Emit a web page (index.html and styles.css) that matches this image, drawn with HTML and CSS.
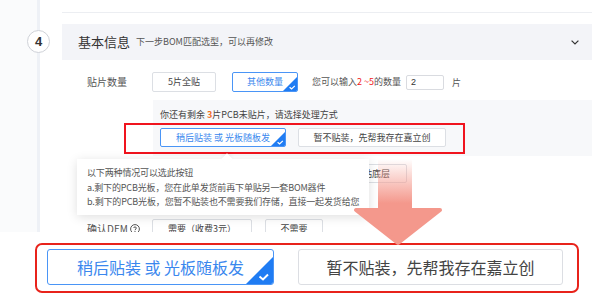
FILE: index.html
```html
<!DOCTYPE html>
<html lang="zh-CN">
  <head>
    <meta charset="UTF-8" />
    <meta name="viewport" content="width=device-width, initial-scale=1.0" />
    <title>贴片选项</title>
    <link rel="stylesheet" href="styles.css">
  </head>
  <body>
    <div class="page">
      <div class="screen">
        <div class="rail"><span class="step">4</span></div>

        <div class="main">
          <div class="divider"></div>

          <div class="section-head">
            <span class="section-title">基本信息</span>
            <span class="section-sub">下一步BOM匹配选型，可以再修改</span>
            <svg class="chevron" width="8" height="5" viewBox="0 0 8 5">
              <polyline points="0.6,0.6 4,4 7.4,0.6" fill="none" stroke="#333" stroke-width="1.2" />
            </svg>
          </div>

          <div class="row row-qty">
            <span class="label">贴片数量</span>
            <button class="opt opt-full">5片全贴</button>
            <button class="opt opt-other active">
              其他数量
              <svg class="tick" width="14" height="14" viewBox="0 0 14 14">
                <polygon points="14,0 14,14 0,14" fill="#1f7cf3" />
                <polyline points="6.6,10.2 8.6,12 11.8,8.8" fill="none" stroke="#fff" stroke-width="1.2" />
              </svg>
            </button>
            <span class="hint">您可以输入<em>2 ~5</em>的数量</span>
            <input class="qty" type="text" value="2" />
            <span class="unit">片</span>
          </div>

          <div class="remain">
            <p class="remain-text">你还有剩余 <b>3</b>片PCB未贴片，请选择处理方式</p>
            <div class="remain-opts">
              <button class="opt opt-later active">
                稍后贴装 或 光板随板发
                <svg class="tick" width="14" height="14" viewBox="0 0 14 14">
                  <polygon points="14,0 14,14 0,14" fill="#1f7cf3" />
                  <polyline points="6.6,10.2 8.6,12 11.8,8.8" fill="none" stroke="#fff" stroke-width="1.2" />
                </svg>
              </button>
              <button class="opt opt-store">暂不贴装，先帮我存在嘉立创</button>
            </div>
            <div class="mark"></div>
          </div>

          <!-- the rest of this row sits under the tooltip -->
          <div class="row row-side">
            <button class="opt opt-bottom">贴底层</button>
          </div>

          <div class="row row-dem">
            <span class="label">确认DEM
              <svg class="help" width="10" height="10" viewBox="0 0 10 10">
                <circle cx="5" cy="5" r="4.4" fill="none" stroke="#444" stroke-width="0.9" />
                <path d="M3.6 4 C3.6 2.6 6.4 2.6 6.4 4 C6.4 5 5 5 5 6.2" fill="none" stroke="#444" stroke-width="0.9" />
                <circle cx="5" cy="7.6" r="0.6" fill="#444" />
              </svg>
            </span>
            <button class="opt opt-need">需要（收费3元）</button>
            <button class="opt opt-no">不需要</button>
          </div>
        </div>

        <div class="tip">
          <p>以下两种情况可以选此按钮</p>
          <p>a.剩下的PCB光板，您在此单发货前再下单贴另一套BOM器件</p>
          <p>b.剩下的PCB光板，您暂不贴装也不需要我们存储，直接一起发货给您</p>
        </div>
      </div>

      <div class="callout">
        <button class="big big-later">
          稍后贴装 或 光板随板发
          <svg class="tick" width="27" height="27" viewBox="0 0 27 27">
            <polygon points="27,0 27,27 0,27" fill="#1f7cf3" />
            <polyline points="13.5,19.5 17,22.5 22,17.5" fill="none" stroke="#fff" stroke-width="2" />
          </svg>
        </button>
        <button class="big big-store">暂不贴装，先帮我存在嘉立创</button>
      </div>

      <svg class="arrow" width="92" height="92" viewBox="0 0 92 92">
        <defs>
          <linearGradient id="shaft" x1="0" y1="0" x2="0" y2="1">
            <stop offset="0" stop-color="#f4988c" stop-opacity="0" />
            <stop offset="0.85" stop-color="#f4988c" stop-opacity="1" />
          </linearGradient>
        </defs>
        <rect x="25" y="2" width="34" height="52" fill="url(#shaft)" />
        <polygon points="3,53 87,53 45,86" fill="#f4988c" stroke="#f4988c" stroke-width="4" stroke-linejoin="round" />
      </svg>
    </div>
  </body>
</html>
```

FILE: styles.css
```css
* {
  box-sizing: border-box;
}

body {
  margin: 0;
  background-color: #fff;
  font-family: "Noto Sans CJK SC", "Noto Sans", sans-serif;
  color: #333;
}

p {
  margin: 0;
}

.page {
  position: relative;
  width: 600px;
  height: 304px;
  overflow: hidden;
}

/* the cropped screenshot */
.screen {
  position: relative;
  display: flex;
  height: 232px;
  overflow: hidden;
}

.rail {
  flex: none;
  width: 62px;
  background:
    linear-gradient(#eef1f6, #eef1f6) 37px 0 / 3px 100% no-repeat,
    linear-gradient(#fafbfc, #fafbfc) 0 0 / 37px 100% no-repeat;
}

.step {
  display: flex;
  align-items: center;
  justify-content: center;
  width: 23px;
  height: 23px;
  margin: 30px 0 0 27px;
  border: 1px solid #cfd2d8;
  border-radius: 50%;
  background-color: #fff;
  font-family: "Liberation Sans", Arial, sans-serif;
  font-size: 13px;
  font-weight: bold;
  color: #333;
  line-height: 1;
}

.main {
  flex: none;
  width: 530px;
}

.divider {
  margin-top: 12px;
  border-top: 1px solid #eceef2;
}

.section-head {
  display: flex;
  align-items: center;
  height: 36px;
  margin-top: 11px;
  padding: 0 13px 0 16px;
  background-color: #f3f4f8;
}

.section-title {
  font-size: 13px;
  line-height: 16px;
  color: #333;
}

.section-sub {
  margin-left: 6px;
  font-size: 9px;
  line-height: 12px;
  color: #555;
}

.chevron {
  margin-left: auto;
}

.row {
  display: flex;
  align-items: center;
  margin-left: 25px;
}

.label {
  display: flex;
  align-items: center;
  gap: 2px;
  width: 65px;
  font-size: 10px;
  line-height: 14px;
  color: #555;
}

.opt {
  position: relative;
  flex: none;
  height: 20px;
  padding: 0;
  border: 1px solid #dcdfe4;
  border-radius: 2px;
  background-color: #fff;
  font-family: inherit;
  font-size: 9px;
  line-height: 12px;
  color: #444;
  overflow: hidden;
}

.opt.active {
  border-color: #4a95f6;
  color: #3a87ee;
}

.tick {
  position: absolute;
  right: 0;
  bottom: 0;
}

.row-qty {
  height: 20px;
  margin-top: 12px;
}

.opt-full {
  width: 64px;
}

.opt-other {
  width: 66px;
  margin-left: 16px;
}

.hint {
  margin-left: 14px;
  font-size: 9px;
  line-height: 12px;
  color: #555;
}

.hint em {
  font-style: normal;
  color: #f0211b;
}

.qty {
  width: 38px;
  height: 15px;
  margin-left: 5px;
  padding: 0 0 0 4px;
  border: 1px solid #d9dbe0;
  border-radius: 2px;
  font-family: "Liberation Sans", Arial, sans-serif;
  font-size: 9px;
  color: #333;
}

.unit {
  margin-left: 8px;
  font-size: 9px;
  color: #555;
}

.remain {
  position: relative;
  height: 56px;
  margin: 8px 0 0 91px;
  padding: 9px 0 0 7px;
  background-color: #f7f8fa;
}

.remain-text {
  font-size: 9px;
  line-height: 12px;
  color: #444;
}

.remain-text b {
  color: #f26b1d;
}

.remain-opts {
  display: flex;
  gap: 12px;
  margin-top: 7px;
}

.opt-later {
  width: 126px;
  height: 19px;
}

.opt-store {
  width: 148px;
  height: 19px;
}

.mark {
  position: absolute;
  left: -29px;
  top: 23px;
  width: 341px;
  height: 31px;
  border: 2px solid #f0141e;
}

.row-side {
  height: 19px;
  margin-top: 8px;
}

.opt-bottom {
  width: 61px;
  height: 19px;
  margin-left: 259px;
}

.row-dem {
  height: 20px;
  margin-top: 36px;
}

.opt-need {
  width: 100px;
}

.opt-no {
  width: 58px;
  margin-left: 13px;
}

/* tooltip over the form */
.tip {
  position: absolute;
  left: 77px;
  top: 159px;
  width: 292px;
  height: 56px;
  padding: 7px 8px 0 10px;
  background-color: #fff;
  box-shadow: 0 2px 10px rgba(0, 0, 0, 0.13);
  font-size: 9px;
  line-height: 14.5px;
  color: #555;
  white-space: nowrap;
  letter-spacing: -0.15px;
}

.tip::before {
  content: "";
  position: absolute;
  left: 146px;
  top: -4px;
  width: 8px;
  height: 8px;
  background-color: #fff;
  transform: rotate(45deg);
  box-shadow: -2px -2px 4px rgba(0, 0, 0, 0.05);
}

/* enlarged callout */
.callout {
  display: flex;
  gap: 24px;
  width: 544px;
  height: 50px;
  margin: 11px 0 0 35px;
  padding: 4px 0 0 10px;
  border: 2px solid #e8231b;
  border-radius: 7px;
}

.big {
  position: relative;
  flex: none;
  height: 36px;
  padding: 0;
  border: 1px solid #dcdee3;
  border-radius: 3px;
  background-color: #fff;
  font-family: inherit;
  font-size: 16px;
  line-height: 20px;
  color: #444;
  overflow: hidden;
}

.big-later {
  width: 227px;
  border-color: #4a95f6;
  color: #3a87ee;
}

.big-store {
  width: 265px;
}

.arrow {
  position: absolute;
  left: 353px;
  top: 157px;
}
```
